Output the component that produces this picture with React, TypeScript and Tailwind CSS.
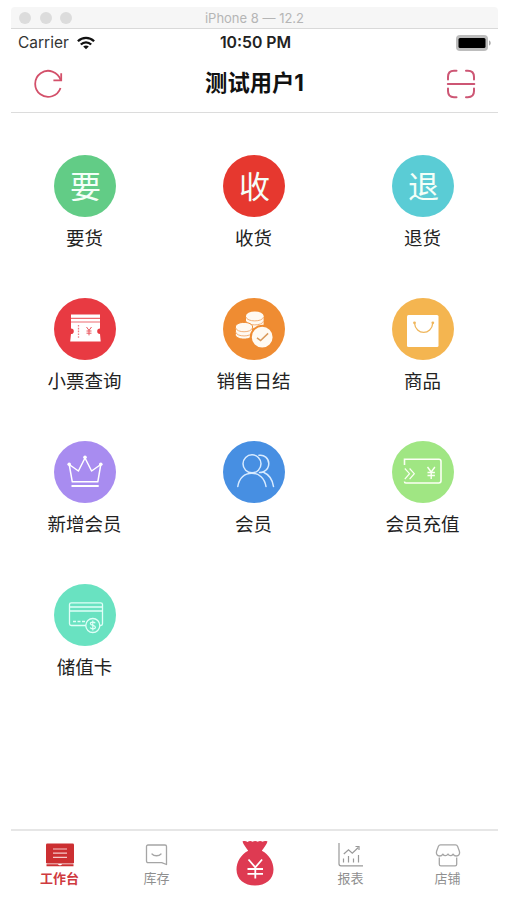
import type { ReactNode } from "react"

const menuItems: { label: string; color: string; icon: ReactNode }[] = [
  { label: "要货", color: "bg-[#62cc86]", icon: <Glyph text="要" /> },
  { label: "收货", color: "bg-[#e6382f]", icon: <Glyph text="收" /> },
  { label: "退货", color: "bg-[#5accd5]", icon: <Glyph text="退" /> },
  { label: "小票查询", color: "bg-[#e83a42]", icon: <TicketIcon /> },
  { label: "销售日结", color: "bg-[#ef8c32]", icon: <CoinsIcon /> },
  { label: "商品", color: "bg-[#f4b550]", icon: <BagIcon /> },
  { label: "新增会员", color: "bg-[#a88cf0]", icon: <CrownIcon /> },
  { label: "会员", color: "bg-[#478fe2]", icon: <MembersIcon /> },
  { label: "会员充值", color: "bg-[#a0e683]", icon: <RechargeIcon /> },
  { label: "储值卡", color: "bg-[#69e2c1]", icon: <CardIcon /> },
]

function Glyph({ text }: { text: string }) {
  return <span className="pt-px pl-0.5 text-[31px] leading-none font-normal text-[#f4fff8]">{text}</span>
}

function TicketIcon() {
  return (
    <svg viewBox="0 0 62 62" className="size-full" fill="none">
      <path d="M17 16.5h29v14a2.8 2.8 0 0 0 0 5.6l.7 7.4H16.2l.8-7.4a2.8 2.8 0 0 0 0-5.6z" fill="#fff" />
      <path d="M17 20.3h29M17 24h29" stroke="#ee6a70" strokeWidth="1.2" />
      <path d="M24.5 27v14" stroke="#ee8086" strokeWidth="1.3" strokeDasharray="1.6 1.2" />
      <path d="M32.5 29l2.5 3.4 2.5-3.4M35 32.4v5M32.5 33h5M32.5 35.2h5" stroke="#e9565d" strokeWidth="1" />
    </svg>
  )
}

function CoinsIcon() {
  return (
    <svg viewBox="0 0 62 62" className="size-full">
      <g fill="#fffaf2">
        <path d="M23 18v8c0 2.6 4 4.3 8.8 4.3s8.8-1.7 8.8-4.3v-8z" />
        <ellipse cx="31.8" cy="17.8" rx="8.8" ry="4.3" />
      </g>
      <path d="M23 19c1 5.2 16.5 5.2 17.6 0M23 23c1 5.2 16.5 5.2 17.6 0" fill="none" stroke="#f3b078" strokeWidth="1" />
      <path
        d="M12.4 29c0-2.7 3.8-4.6 8.6-4.6s8.6 1.900 8.600 4.600v7.500c0 2.700-3.800 4.600-8.600 4.600s-8.600-1.900-8.600-4.600z"
        fill="#fffaf2"
        stroke="#ef8c32"
        strokeWidth="1"
      />
      <path d="M12.800 30c1 5 15.500 5 16.500 0M12.800 34.200c1 5 15.500 5 16.500 0" fill="none" stroke="#f3b078" strokeWidth="1" />
      <circle cx="39.200" cy="39.200" r="11.400" fill="#fffaf2" stroke="#ef8c32" strokeWidth="2" />
      <path d="M34 39.800l3.600 2.800 7.500-7.200" fill="none" stroke="#d99a5c" strokeWidth="1.500" />
    </svg>
  )
}

function BagIcon() {
  return (
    <svg viewBox="0 0 62 62" className="size-full" fill="none">
      <rect x="15" y="17" width="31.5" height="32" rx="1.5" fill="#fff" />
      <path d="M22.5 25c1 12.500 17.300 12.500 18.300 0" stroke="#efb65c" strokeWidth="1.3" />
      <circle cx="22.5" cy="24.8" r="1.4" fill="#efb65c" />
      <circle cx="40.8" cy="24.8" r="1.4" fill="#efb65c" />
    </svg>
  )
}

function CrownIcon() {
  return (
    <svg viewBox="0 0 62 62" className="size-full" fill="none" stroke="#fff" strokeWidth="1.5" strokeLinejoin="round">
      <path d="M18.300 40.800L15.200 23.500l9.200 6.500L31 17l6.600 13 9.200-6.500-3 17.300z" />
      <path d="M17.500 45h27.200" strokeWidth="2" />
      <g fill="#fff" stroke="none">
        <circle cx="15.2" cy="23.2" r="1.8" />
        <circle cx="31" cy="16.2" r="1.8" />
        <circle cx="46.8" cy="23.2" r="1.8" />
      </g>
    </svg>
  )
}

function MembersIcon() {
  return (
    <svg viewBox="0 0 62 62" className="size-full" fill="none" stroke="#d8ebff" strokeWidth="1.5" strokeLinecap="round">
      <circle cx="29" cy="22.8" r="9" />
      <path d="M14.800 45.500c1.200-8.300 6.700-13.300 14-13.300s12.800 5 14.200 13.300" />
      <path d="M36 14.300c5-1 9.800 3 9.800 8.200 0 3.600-2 6.700-5.300 8.200-1.500.700-3 .900-4 .900M40.500 31.200c5.200 2.200 9 7.300 10 14.300" />
    </svg>
  )
}

function RechargeIcon() {
  return (
    <svg viewBox="0 0 62 62" className="size-full" fill="none" stroke="#fbfff4" strokeWidth="1.6">
      <path d="M12.500 24v-5.800h34.300c1.300 0 2.200.900 2.200 2.200v19.400c0 1.300-.9 2.200-2.200 2.200H13.800c-1 0-1.300-.7-1.300-1.500" />
      <path d="M12.800 27.500l4.700 5.200-4.700 5.500M17.600 27.500l4.700 5.200-4.700 5.500" strokeWidth="1.200" />
      <path d="M35.500 26l3.700 5 3.700-5M39.200 31v7M35.500 31.500h7.400M35.500 34.500h7.400" strokeWidth="1.4" />
    </svg>
  )
}

function CardIcon() {
  return (
    <svg viewBox="0 0 62 62" className="size-full" fill="none" stroke="#e0fff7" strokeWidth="1.3">
      <rect x="15.5" y="18.8" width="33" height="22.7" rx="1.8" />
      <path d="M15.500 23h33M15.500 27h33" />
      <path d="M19 37.500h12" strokeDasharray="3 1.5" />
      <circle cx="38.8" cy="41.5" r="7" fill="#69e2c1" />
      <path d="M41.200 39.200c-.5-1.200-4.800-1.600-4.800.5 0 2.200 5 1.300 5 3.600 0 2.100-4.500 1.900-5.200.300M38.800 36.500v10" strokeWidth="1.2" />
    </svg>
  )
}

function MonitorIcon() {
  return (
    <svg viewBox="0 0 28 24" className="h-6 w-7">
      <rect x="0" y="0.5" width="28" height="20" rx="1.3" fill="#cc2f32" />
      <path d="M7 6h14M7 10.200h14M7 14.400h14" stroke="#f5c9c9" strokeWidth="1.2" />
      <path d="M.5 21.300h11.300l1.300 1h1.800l1.300-1h11.300v2H.5z" fill="#cc2f32" />
    </svg>
  )
}

function StockIcon() {
  return (
    <svg viewBox="0 0 28 24" className="h-6 w-7" fill="none" stroke="#a5a5a5" strokeWidth="1.3" strokeLinecap="round" strokeLinejoin="round">
      <path d="M5 2h17c.9 0 1.500.6 1.500 1.500v18l-4.800-1.900H5c-.9 0-1.500-.6-1.500-1.500V3.500C3.500 2.600 4.100 2 5 2z" />
      <path d="M9 11c2 2.300 7 2.300 9 0" />
    </svg>
  )
}

function ChartIcon() {
  return (
    <svg viewBox="0 0 28 24" className="h-6 w-7" fill="none" stroke="#999" strokeWidth="1.2">
      <path d="M2 0v20.800c0 1.200.8 2 2 2h22" />
      <path d="M6.500 15.500v4M11.500 13v6.500M16.500 15.500v4M21.500 12v7.500" />
      <path d="M6.800 11l4.700-4.300 3.800 3.500 6-5.700" />
      <path d="M18.500 3.500h3.500v3.500" />
    </svg>
  )
}

function ShopIcon() {
  return (
    <svg viewBox="0 0 28 24" className="h-6 w-7" fill="none" stroke="#a5a5a5" strokeWidth="1.3" strokeLinejoin="round">
      <path d="M6.500 1.800h15c1.200 0 1.800.8 2.200 1.800l1.700 4.700c.8 2.500-.6 4.700-3 4.700-1.500 0-2.700-.7-3.300-1.900-.7 1.100-1.500 1.600-2.600 1.600s-2-.6-2.500-1.700c-.6 1.100-1.500 1.700-2.600 1.700S9.500 12.200 8.900 11.100C8.200 12.300 7 13 5.600 13c-2.400 0-3.800-2.200-3-4.700l1.700-4.700c.4-1 1-1.800 2.200-1.800z" />
      <path d="M5.300 14.500v6.700c0 1 .6 1.600 1.600 1.600h14.200c1 0 1.600-.6 1.600-1.600v-6.700" />
    </svg>
  )
}

function MoneyBagIcon() {
  return (
    <svg viewBox="0 0 38 46" className="h-[46px] w-[38px]">
      <path d="M6.500 1.500c2-.8 3.700-.3 5 .5 1.500-1.300 3.800-1.300 5-.2 1.500-1.200 3.800-1.200 5.200 0 1.400-1.200 3.500-1.200 4.900 0 1.200-.8 2.800-1 4.900-.3-.7 3-3.600 6-5.700 9.300 7.400 3.800 11.700 11.500 11.700 18.700C37.500 39.500 29.500 45.500 19 45.500S.5 39.500.5 29.500c0-7.200 4.300-14.900 11.700-18.700-2-3.300-5-6.300-5.700-9.300z" fill="#de3a52" />
      <path d="M12.500 19.500l6.800 7.800 6.800-7.800M19.300 27v11.500M11.500 29h15.500M11.500 33.800h15.500" fill="none" stroke="#fff" strokeWidth="1.8" />
    </svg>
  )
}

function WifiIcon() {
  return (
    <svg viewBox="0 0 18 14" className="h-3.5 w-[18px]" fill="none" stroke="#111" strokeWidth="2.3">
      <path d="M.9 5.300c4.600-4.500 11.600-4.500 16.200 0M3.800 8.500c3-2.900 7.400-2.900 10.400 0" />
      <path d="M9 13.300L6.200 10.600c1.600-1.500 4-1.500 5.600 0z" fill="#111" stroke="none" />
    </svg>
  )
}

function BatteryIcon() {
  return (
    <svg viewBox="0 0 36 16" className="h-4 w-9">
      <rect x="0" y="0" width="32" height="16" rx="4" fill="#bdbdbd" />
      <rect x="2.5" y="3" width="27" height="10" rx="1.5" fill="#000" />
      <path d="M33 5.500c2.300.5 2.300 4.500 0 5z" fill="#aaa" />
    </svg>
  )
}

function RefreshIcon() {
  return (
    <svg viewBox="0 0 30 30" className="size-[30px]" fill="none" stroke="#d3506a" strokeWidth="1.8">
      <path d="M27.500 19A13 13 0 1 1 27.600 11" />
      <path d="M28.200 4.200v7.200h-7.800" />
    </svg>
  )
}

function ScanIcon() {
  return (
    <svg viewBox="0 0 30 30" className="size-[30px]" fill="none" stroke="#cd5674" strokeWidth="2" strokeLinecap="round">
      <path d="M2 10.500V8c0-4 2.500-6.200 6-6.200h2.500M20 1.800h1.800c4 0 6.200 2.500 6.200 6.200v2.500M28 19.500V22c0 4-2.500 6.200-6.200 6.200H20M10.500 28.200H8c-4 0-6-2.500-6-6.200v-2.500M1.800 15h26.500" />
    </svg>
  )
}

function Tab({ label, icon, active = false }: { label: string; icon: ReactNode; active?: boolean }) {
  return (
    <div className={active ? "flex flex-col items-center font-bold text-[#cf3a40]" : "flex flex-col items-center font-normal text-[#8f8f8f]"}>
      {icon}
      <span className="mt-px text-[13px] leading-5">{label}</span>
    </div>
  )
}

export default function App() {
  return (
    <div className="flex h-[900px] w-[507px] flex-col overflow-hidden bg-white pt-[7px] font-['Inter','Noto_Sans_CJK_SC',sans-serif] text-[#222]">
      <header className="mr-[9px] ml-[11px] shrink-0">
        <div className="grid h-[22px] grid-cols-3 items-center rounded-t-sm border-b border-[#d9d9d9] bg-[#f6f6f6]">
          <div className="flex gap-[8.5px] pl-2">
            <span className="size-3 rounded-full bg-[#dcdcdc]" />
            <span className="size-3 rounded-full bg-[#dcdcdc]" />
            <span className="size-3 rounded-full bg-[#dcdcdc]" />
          </div>
          <span className="pt-0.5 text-center text-[13px] leading-none whitespace-nowrap text-[#b5b5b5]">iPhone 8 — 12.2</span>
        </div>
        <div className="grid h-7 grid-cols-3 items-center">
          <div className="flex items-center gap-2 pl-[7px] text-[15.5px] text-[#333]">
            <span>Carrier</span>
            <WifiIcon />
          </div>
          <span className="pl-0.5 text-center text-[15.8px] font-semibold">10:50 PM</span>
          <div className="flex justify-end pr-[6px]">
            <BatteryIcon />
          </div>
        </div>
        <div className="flex h-[56px] items-center justify-between border-b border-[#dcdcdc] px-[22px] pb-0.5">
          <RefreshIcon />
          <h1 className="text-[22.3px] leading-none font-bold text-[#111]">测试用户1</h1>
          <ScanIcon />
        </div>
      </header>

      <main className="grid flex-1 auto-rows-[143px] grid-cols-3 pt-[42px]">
        {menuItems.map((item) => (
          <div key={item.label} className="flex flex-col items-center">
            <div className={`flex size-[62px] items-center justify-center rounded-full ${item.color}`}>{item.icon}</div>
            <span className="mt-2 text-[18.5px] leading-[26px]">{item.label}</span>
          </div>
        ))}
      </main>

      <nav className="mr-[9px] ml-[11px] grid h-[71px] shrink-0 grid-cols-5 border-t-2 border-[#e6e6e6] pt-3 pr-0.5">
        <Tab label="工作台" icon={<MonitorIcon />} active />
        <Tab label="库存" icon={<StockIcon />} />
        <div className="-mt-[3px] flex justify-center pl-0.5">
          <MoneyBagIcon />
        </div>
        <Tab label="报表" icon={<ChartIcon />} />
        <Tab label="店铺" icon={<ShopIcon />} />
      </nav>
    </div>
  )
}
